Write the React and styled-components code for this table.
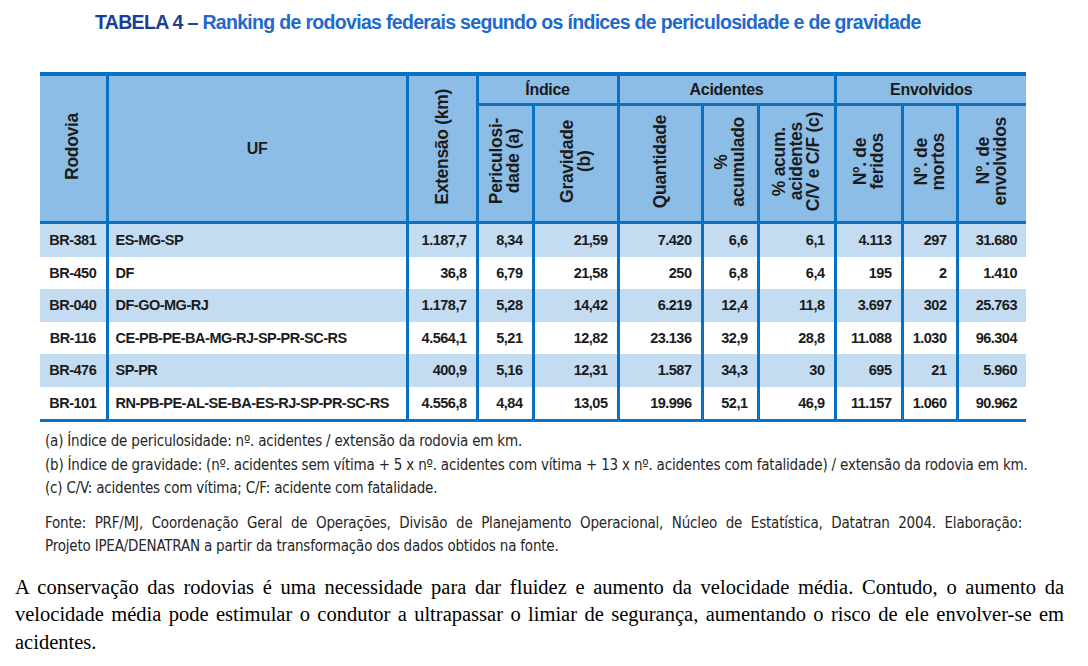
import React from 'react';
import styled, { createGlobalStyle } from 'styled-components';

const LINE = '#0a70c2';

const columns = [67, 300, 70, 56, 85, 84, 56, 77, 67, 55, 69];

const rows = [
  ['BR-381', 'ES-MG-SP', '1.187,7', '8,34', '21,59', '7.420', '6,6', '6,1', '4.113', '297', '31.680'],
  ['BR-450', 'DF', '36,8', '6,79', '21,58', '250', '6,8', '6,4', '195', '2', '1.410'],
  ['BR-040', 'DF-GO-MG-RJ', '1.178,7', '5,28', '14,42', '6.219', '12,4', '11,8', '3.697', '302', '25.763'],
  ['BR-116', 'CE-PB-PE-BA-MG-RJ-SP-PR-SC-RS', '4.564,1', '5,21', '12,82', '23.136', '32,9', '28,8', '11.088', '1.030', '96.304'],
  ['BR-476', 'SP-PR', '400,9', '5,16', '12,31', '1.587', '34,3', '30', '695', '21', '5.960'],
  ['BR-101', 'RN-PB-PE-AL-SE-BA-ES-RJ-SP-PR-SC-RS', '4.556,8', '4,84', '13,05', '19.996', '52,1', '46,9', '11.157', '1.060', '90.962'],
];

const subHeads = [
  ['Periculosi-', 'dade (a)'],
  ['Gravidade', '(b)'],
  ['Quantidade'],
  ['%', 'acumulado'],
  ['% acum.', 'acidentes', 'C/V e C/F (c)'],
  ['Nº. de', 'feridos'],
  ['Nº. de', 'mortos'],
  ['Nº. de', 'envolvidos'],
];

const GlobalStyle = createGlobalStyle`
  body {
    margin: 0;
    background: #ffffff;
    font-family: "Liberation Sans", Arial, sans-serif;
  }
`;

const Page = styled.div`
  width: 1088px;
  padding-top: 9px;
`;

const Title = styled.h1`
  margin: 0;
  padding-left: 95px;
  font-family: "Liberation Sans", Arial, sans-serif;
  font-size: 19.5px;
  line-height: 26px;
  font-weight: 700;
  letter-spacing: -0.68px;
  color: #2169cc;
  white-space: nowrap;
`;

const TitleLabel = styled.span`
  color: #1c3f93;
`;

const TableWrap = styled.div`
  margin: 37px 0 0 40px;
`;

const Table = styled.table`
  width: 986px;
  border-collapse: collapse;
  table-layout: fixed;
  color: #1b1b1b;
`;

const Col = styled.col`
  width: ${p => p.$w}px;
`;

const HeadCell = styled.th`
  padding: 0;
  background: #8bbde6;
  font-size: 16px;
  font-weight: 700;
  letter-spacing: -0.3px;
  text-align: center;
  vertical-align: middle;
  border-top: ${p => (p.$top ? `4px solid ${LINE}` : 'none')};
  border-bottom: 3px solid ${LINE};
  border-left: ${p => (p.$first ? 'none' : `3px solid ${LINE}`)};
  height: ${p => p.$h || 'auto'};
`;

const Vertical = styled.span`
  display: inline-block;
  writing-mode: vertical-rl;
  transform: rotate(180deg);
  font-size: 17.5px;
  line-height: 17px;
  letter-spacing: -0.3px;
  text-align: center;
  white-space: nowrap;
`;

const Row = styled.tr`
  background: ${p => (p.$shade ? '#c4dcf2' : '#ffffff')};
`;

const Cell = styled.td`
  height: 32.5px;
  padding: ${p => (p.$align === 'left' ? '0 4px 0 7px' : p.$align === 'center' ? '0' : '0 9px 0 0')};
  text-align: ${p => p.$align};
  font-size: 14.5px;
  font-weight: 700;
  letter-spacing: -0.5px;
  white-space: nowrap;
  border-left: ${p => (p.$first ? 'none' : `3px solid ${LINE}`)};
  border-bottom: ${p => (p.$last ? `3px solid ${LINE}` : 'none')};
`;

const Notes = styled.div`
  margin: 8px 0 0 45px;
  width: 977px;
  font-family: "DejaVu Sans Condensed", "Liberation Sans", sans-serif;
  font-size: 15px;
  line-height: 23.5px;
  letter-spacing: -0.2px;
  color: #262626;
`;

const Note = styled.p`
  margin: 0;
  white-space: ${p => (p.$justify ? 'normal' : 'nowrap')};
  text-align: ${p => (p.$justify ? 'justify' : 'left')};
  text-align-last: ${p => (p.$justify ? 'justify' : 'auto')};
`;

const Source = styled.div`
  margin-top: 11px;
`;

const Paragraph = styled.p`
  margin: 15px 24px 0 15px;
  font-family: "Liberation Serif", "Times New Roman", serif;
  font-size: 20.5px;
  line-height: 27.6px;
  text-align: justify;
  color: #000000;
`;

const VerticalText = ({ lines }) => (
  <Vertical>
    {lines.map((l, i) => (
      <React.Fragment key={i}>
        {i > 0 && <br />}
        {l}
      </React.Fragment>
    ))}
  </Vertical>
);

export default function App() {
  return (
    <Page>
      <GlobalStyle />
      <Title>
        <TitleLabel>TABELA 4 – </TitleLabel>Ranking de rodovias federais segundo os índices de periculosidade e de gravidade
      </Title>

      <TableWrap>
        <Table>
          <colgroup>
            {columns.map((w, i) => <Col key={i} $w={w} />)}
          </colgroup>
          <thead>
            <tr>
              <HeadCell rowSpan={2} $top $first>
                <VerticalText lines={['Rodovia']} />
              </HeadCell>
              <HeadCell rowSpan={2} $top>UF</HeadCell>
              <HeadCell rowSpan={2} $top>
                <VerticalText lines={['Extensão (km)']} />
              </HeadCell>
              <HeadCell colSpan={2} $top $h="27px">Índice</HeadCell>
              <HeadCell colSpan={3} $top $h="27px">Acidentes</HeadCell>
              <HeadCell colSpan={3} $top $h="27px">Envolvidos</HeadCell>
            </tr>
            <tr>
              {subHeads.map((lines, i) => (
                <HeadCell key={i} $h="115px">
                  <VerticalText lines={lines} />
                </HeadCell>
              ))}
            </tr>
          </thead>
          <tbody>
            {rows.map((r, ri) => (
              <Row key={r[0]} $shade={ri % 2 === 0}>
                {r.map((v, ci) => (
                  <Cell
                    key={ci}
                    $first={ci === 0}
                    $last={ri === rows.length - 1}
                    $align={ci === 0 ? 'center' : ci === 1 ? 'left' : 'right'}
                  >
                    {v}
                  </Cell>
                ))}
              </Row>
            ))}
          </tbody>
        </Table>
      </TableWrap>

      <Notes>
        <Note>(a) Índice de periculosidade: nº. acidentes / extensão da rodovia em km.</Note>
        <Note>(b) Índice de gravidade: (nº. acidentes sem vítima + 5 x nº. acidentes com vítima + 13 x nº. acidentes com fatalidade) / extensão da rodovia em km.</Note>
        <Note>(c) C/V: acidentes com vítima; C/F: acidente com fatalidade.</Note>
        <Source>
          <Note $justify>Fonte: PRF/MJ, Coordenação Geral de Operações, Divisão de Planejamento Operacional, Núcleo de Estatística, Datatran 2004. Elaboração:</Note>
          <Note>Projeto IPEA/DENATRAN a partir da transformação dos dados obtidos na fonte.</Note>
        </Source>
      </Notes>

      <Paragraph>
        A conservação das rodovias é uma necessidade para dar fluidez e aumento da velocidade média. Contudo, o aumento da velocidade média pode estimular o condutor a ultrapassar o limiar de segurança, aumentando o risco de ele envolver-se em acidentes.
      </Paragraph>
    </Page>
  );
}
